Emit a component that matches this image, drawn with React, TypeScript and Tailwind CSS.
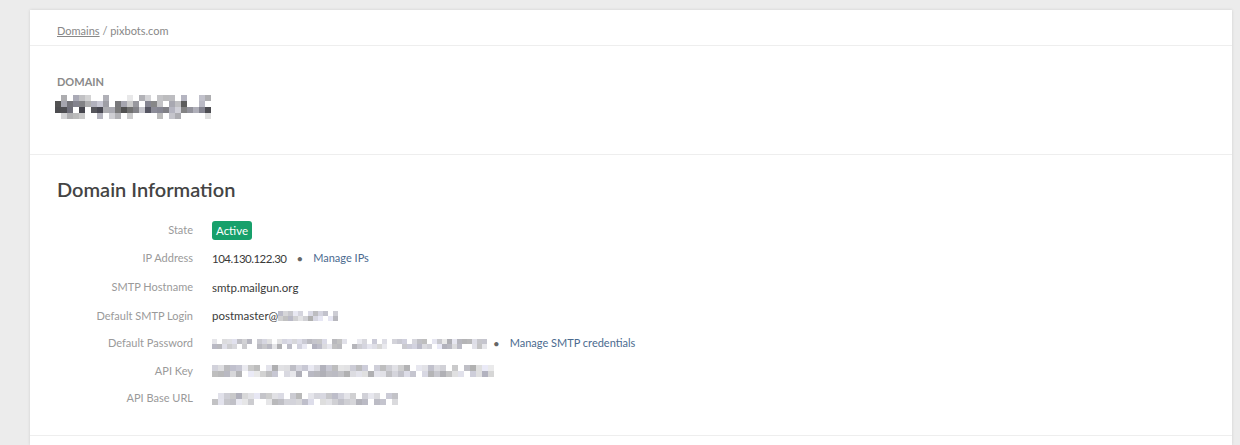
import React from "react";

const mosaic = (seed: number, w: number, h: number, cell: number, dark: boolean, band: boolean) => {
  const rects: JSX.Element[] = [];
  let s = seed;
  const rnd = () => {
    s = (s * 9301 + 49297) % 233280;
    return s / 233280;
  };
  const cols = Math.floor(w / cell);
  const rows = Math.floor(h / cell);
  for (let r = 0; r < rows; r++) {
    for (let c = 0; c < cols; c++) {
      const v = rnd();
      const edge = band && (r === 0 || r === rows - 1);
      if (v < (edge ? 0.5 : 0.15)) continue;
      const g = dark
        ? Math.floor((edge ? 165 : 70) + rnd() * (edge ? 70 : 140))
        : Math.floor(175 + rnd() * 60);
      const b = Math.min(255, g + Math.floor(rnd() * 14));
      rects.push(
        <rect key={`${r}-${c}`} x={c * cell} y={r * cell} width={cell} height={cell} fill={`rgb(${g},${g},${b})`} />
      );
    }
  }
  return rects;
};

function Blur({ w, h, seed, cell = 6, dark = false, band = false }: { w: number; h: number; seed: number; cell?: number; dark?: boolean; band?: boolean }) {
  return (
    <svg width={w} height={h} viewBox={`0 0 ${w} ${h}`} className="block">
      {mosaic(seed, w, h, cell, dark, band)}
    </svg>
  );
}

function Row({ label, children, h = "h-[28px]" }: { label: string; children: React.ReactNode; h?: string }) {
  return (
    <div className={`flex items-center ${h}`}>
      <div className="w-[136px] text-right text-[11px] text-[#9a9a9a]">{label}</div>
      <div className="ml-[19px] flex items-center text-[11.5px] text-[#3a3a3a]">{children}</div>
    </div>
  );
}

export default function App() {
  return (
    <div className="min-h-[445px] bg-[#ececec] pt-[10px] pl-[30px] pr-[8px]" style={{ fontFamily: "Lato, 'Noto Sans', sans-serif" }}>
      <div className="bg-white shadow-[0_0_3px_rgba(0,0,0,0.12)] min-h-[435px]">
        <div className="h-[36px] pl-[27px] pt-[14px] leading-[14px] border-b border-[#eeeeee] text-[11px] text-[#888]">
          <span className="underline">Domains</span>
          <span>&nbsp;/ pixbots.com</span>
        </div>
        <div className="h-[109px] pl-[27px] pt-[29px] border-b border-[#eeeeee]">
          <div className="text-[11px] leading-[14px] font-bold text-[#8a8a8a]">DOMAIN</div>
          <div className="mt-[6px] -ml-[2px]">
            <Blur w={160} h={24} seed={7} cell={6} dark band />
          </div>
        </div>
        <div className="pl-[27px] pt-[24px] h-[281px] border-b border-[#eeeeee]">
          <h2 className="text-[20px] text-[#444] font-semibold leading-[24px] -mt-[2px]">Domain Information</h2>
          <div className="mt-[15px]">
            <Row label="State">
              <span className="bg-[#17a06b] text-white text-[11.5px] rounded-[3px] px-[4px] py-[2px] leading-[15px]">Active</span>
            </Row>
            <Row label="IP Address" h="h-[29px]">
              <span className="tracking-[-0.5px]">104.130.122.30</span>
              <span className="mx-[10px] text-[#666]">•</span>
              <span className="text-[11px] text-[#4b6b8f]">Manage IPs</span>
            </Row>
            <Row label="SMTP Hostname" h="h-[29px]">smtp.mailgun.org</Row>
            <Row label="Default SMTP Login">
              <span>postmaster@</span>
              <Blur w={60} h={10} seed={3} cell={5} />
            </Row>
            <Row label="Default Password" h="h-[27px]">
              <Blur w={275} h={10} seed={11} cell={5} />
              <span className="mx-[6px] text-[#666]">•</span>
              <span className="ml-[4px] text-[11px] text-[#4b6b8f]">Manage SMTP credentials</span>
            </Row>
            <Row label="API Key">
              <Blur w={287} h={12} seed={19} cell={6} />
            </Row>
            <Row label="API Base URL" h="h-[27px]">
              <Blur w={190} h={12} seed={23} cell={6} />
            </Row>
          </div>
        </div>
      </div>
    </div>
  );
}
